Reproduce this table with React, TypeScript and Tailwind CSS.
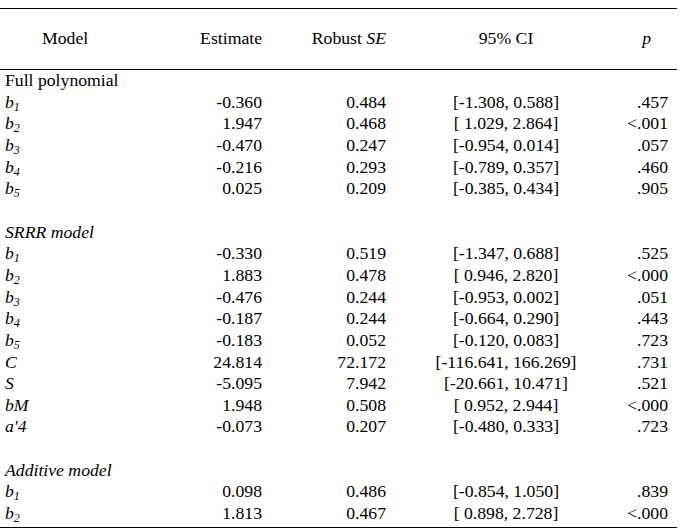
import React from 'react';

type Row =
    | { kind: 'section'; label: string; italic?: boolean }
    | { kind: 'blank' }
    | { kind: 'data'; name: string; sub?: string; est: string; se: string; ci: string; p: string };

const rows: Row[] = [
    { kind: 'section', label: 'Full polynomial' },
    { kind: 'data', name: 'b', sub: '1', est: '-0.360', se: '0.484', ci: '[-1.308, 0.588]', p: '.457' },
    { kind: 'data', name: 'b', sub: '2', est: '1.947', se: '0.468', ci: '[ 1.029, 2.864]', p: '<.001' },
    { kind: 'data', name: 'b', sub: '3', est: '-0.470', se: '0.247', ci: '[-0.954, 0.014]', p: '.057' },
    { kind: 'data', name: 'b', sub: '4', est: '-0.216', se: '0.293', ci: '[-0.789, 0.357]', p: '.460' },
    { kind: 'data', name: 'b', sub: '5', est: '0.025', se: '0.209', ci: '[-0.385, 0.434]', p: '.905' },
    { kind: 'blank' },
    { kind: 'section', label: 'SRRR model', italic: true },
    { kind: 'data', name: 'b', sub: '1', est: '-0.330', se: '0.519', ci: '[-1.347, 0.688]', p: '.525' },
    { kind: 'data', name: 'b', sub: '2', est: '1.883', se: '0.478', ci: '[ 0.946, 2.820]', p: '<.000' },
    { kind: 'data', name: 'b', sub: '3', est: '-0.476', se: '0.244', ci: '[-0.953, 0.002]', p: '.051' },
    { kind: 'data', name: 'b', sub: '4', est: '-0.187', se: '0.244', ci: '[-0.664, 0.290]', p: '.443' },
    { kind: 'data', name: 'b', sub: '5', est: '-0.183', se: '0.052', ci: '[-0.120, 0.083]', p: '.723' },
    { kind: 'data', name: 'C', est: '24.814', se: '72.172', ci: '[-116.641, 166.269]', p: '.731' },
    { kind: 'data', name: 'S', est: '-5.095', se: '7.942', ci: '[-20.661, 10.471]', p: '.521' },
    { kind: 'data', name: 'bM', est: '1.948', se: '0.508', ci: '[ 0.952, 2.944]', p: '<.000' },
    { kind: 'data', name: "a'4", est: '-0.073', se: '0.207', ci: '[-0.480, 0.333]', p: '.723' },
    { kind: 'blank' },
    { kind: 'section', label: 'Additive model', italic: true },
    { kind: 'data', name: 'b', sub: '1', est: '0.098', se: '0.486', ci: '[-0.854, 1.050]', p: '.839' },
    { kind: 'data', name: 'b', sub: '2', est: '1.813', se: '0.467', ci: '[ 0.898, 2.728]', p: '<.000' },
];

const App: React.FC = () => {
    return (
        <div className="w-[684px] h-[532px] bg-white text-black overflow-hidden font-['Liberation_Serif','Times_New_Roman',serif] text-[17.7px] leading-[21.65px]">
            <table className="mt-2 w-[677px] table-fixed border-collapse">
                <colgroup>
                    <col className="w-[170px]" />
                    <col className="w-[92px]" />
                    <col className="w-[125px]" />
                    <col className="w-[238px]" />
                    <col className="w-[52px]" />
                </colgroup>
                <thead>
                    <tr className="h-[61px] border-t border-b border-black">
                        <th className="font-normal text-left pl-[42px]">Model</th>
                        <th className="font-normal text-right">Estimate</th>
                        <th className="font-normal text-right pr-px">
                            Robust <span className="italic">SE</span>
                        </th>
                        <th className="font-normal text-center">95% CI</th>
                        <th className="font-normal text-right pr-[26px] italic">p</th>
                    </tr>
                </thead>
                <tbody className="border-b border-black">
                    {rows.map((r, i) => {
                        if (r.kind === 'blank') {
                            return (
                                <tr key={i} className="h-[21.65px]">
                                    <td colSpan={5}></td>
                                </tr>
                            );
                        }
                        if (r.kind === 'section') {
                            return (
                                <tr key={i} className="h-[21.65px]">
                                    <td colSpan={5} className={`pl-[5px] p-0 whitespace-nowrap ${r.italic ? 'italic' : ''}`}>
                                        {r.label}
                                    </td>
                                </tr>
                            );
                        }
                        const last = i === rows.length - 1;
                        return (
                            <tr key={i} className={last ? 'h-[24px] align-top' : 'h-[21.65px]'}>
                                <td className="pl-[5px] italic whitespace-nowrap">
                                    {r.name}
                                    {r.sub && <sub className="text-[12px] italic">{r.sub}</sub>}
                                </td>
                                <td className="text-right">{r.est}</td>
                                <td className="text-right pr-px">{r.se}</td>
                                <td className="text-center whitespace-pre">{r.ci}</td>
                                <td className="text-right pr-[9px]">{r.p}</td>
                            </tr>
                        );
                    })}
                </tbody>
            </table>
        </div>
    );
};

export default App;
